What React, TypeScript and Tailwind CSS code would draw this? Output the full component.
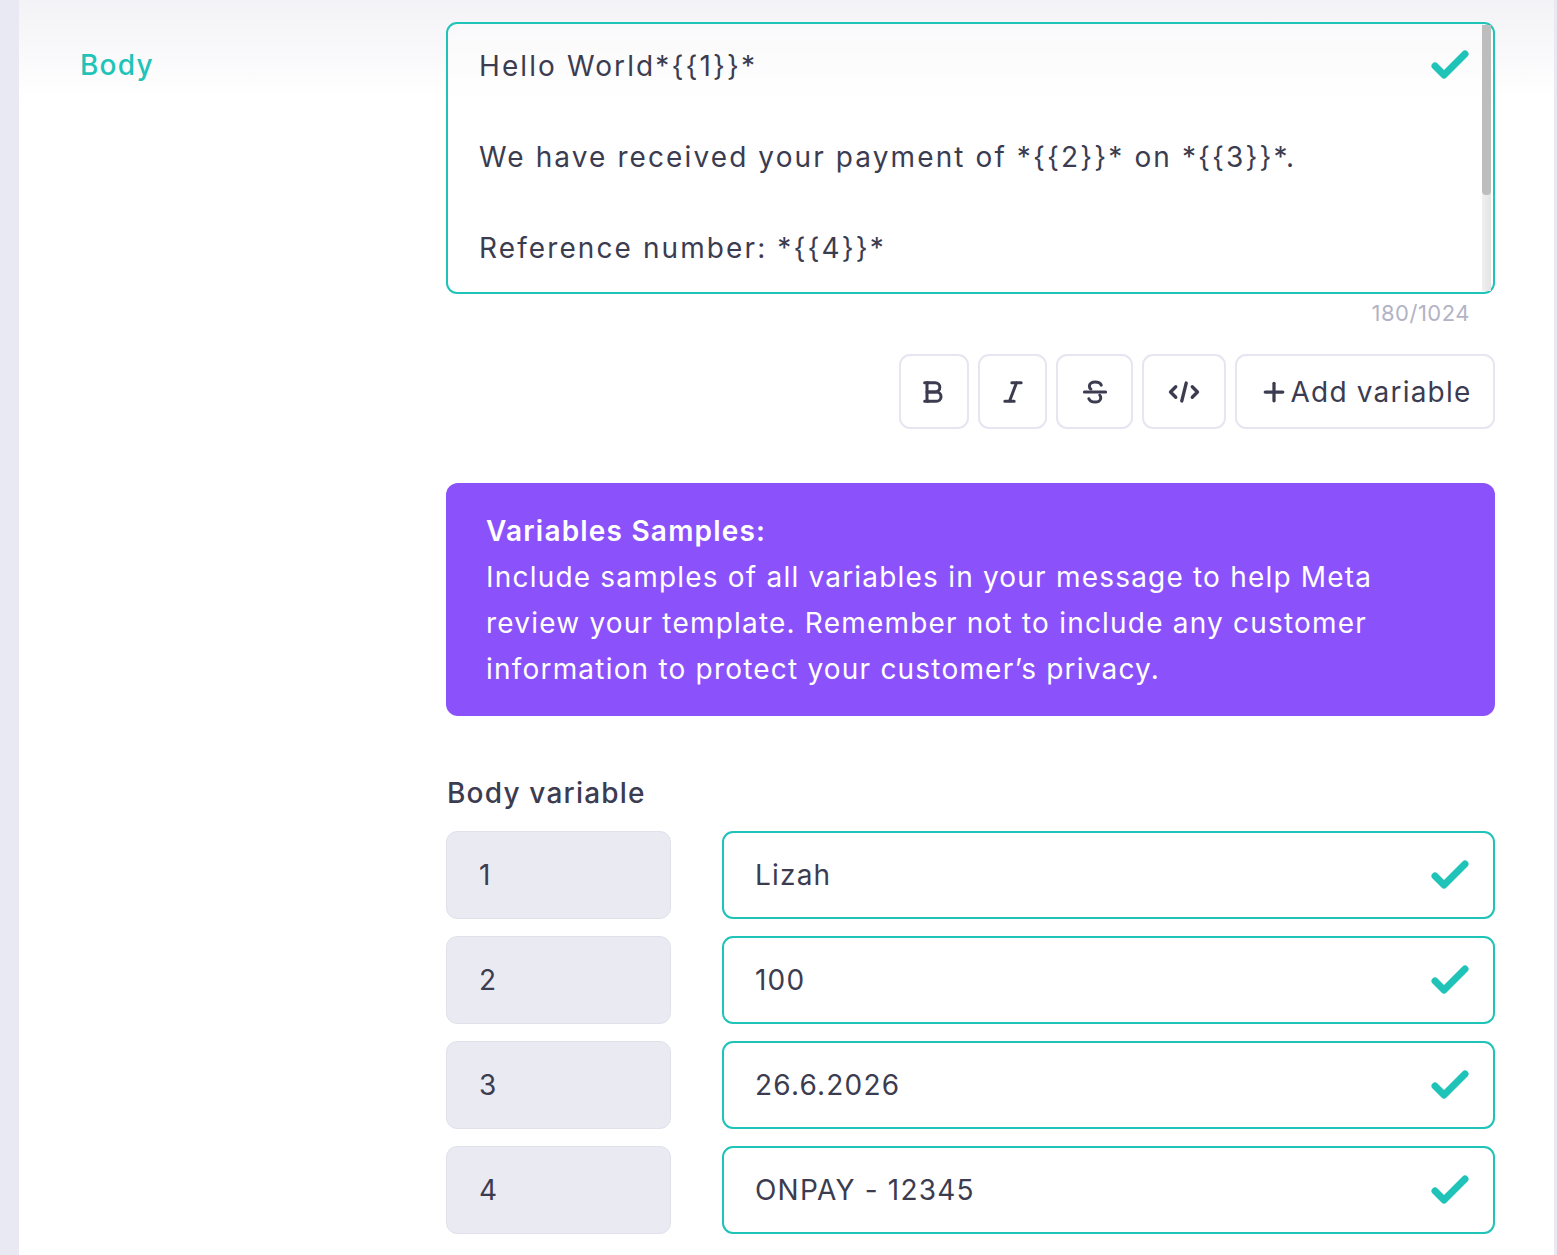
import { Plus } from 'lucide-react';

const teal = '#1fc3b7';

const Check = ({ className = '' }: { className?: string }) => (
  <svg viewBox="0 0 40 32" className={className} fill="none">
    <path d="M5 17 L14 26 L35 5" stroke={teal} strokeWidth="7" strokeLinecap="round" strokeLinejoin="round" />
  </svg>
);

const variables = [
  { id: '1', value: 'Lizah' },
  { id: '2', value: '100' },
  { id: '3', value: '26.6.2026' },
  { id: '4', value: 'ONPAY - 12345' },
];

const ToolBtn = ({ w, children }: { w: string; children: React.ReactNode }) => (
  <button className={`${w} h-[75px] rounded-[11px] border-2 border-[#e6e6f1] bg-white flex items-center justify-center text-[#3c3c50]`}>
    {children}
  </button>
);

const App = () => {
  return (
    <div className="min-h-screen w-full bg-[#e9e9f3] pl-[19px] pr-[3px] font-['Inter',sans-serif] tracking-[1.2px] text-[#3c3c50]">
      <div className="min-h-[1255px] bg-gradient-to-b from-[#f3f3f7] via-white via-[8%] to-white flex">
        {/* label column */}
        <div className="w-[427px] shrink-0 pl-[61px] pt-[45px]">
          <h2 className="text-[28px] leading-[40px] text-[#1fc3b7] font-medium">Body</h2>
        </div>

        <div className="w-[1049px] shrink-0 pt-[22px]">
          {/* message body */}
          <div className="relative h-[272px] rounded-[11px] border-2 border-[#1fc3b7] bg-white/40 pl-[31px] pt-[20px] pr-[80px] text-[28px] leading-[45.5px] tracking-[2.1px]">
            <p>Hello World*{'{{1}}'}*</p>
            <p>&nbsp;</p>
            <p>We have received your payment of *{'{{2}}'}* on *{'{{3}}'}*.</p>
            <p>&nbsp;</p>
            <p>Reference number: *{'{{4}}'}*</p>
            <Check className="absolute right-[23px] top-[24px] w-[40px] h-[34px]" />
            <div className="absolute right-[2px] top-[1px] bottom-[1px] w-[9px] bg-gradient-to-r from-[#f0f0f0] to-[#e4e4e4] flex flex-col">
              <div className="h-[170px] rounded-b-[4px] bg-[#bdbdbd]" />
            </div>
          </div>
          <div className="pr-[25px] pt-[4px] text-right text-[22px] leading-[30px] tracking-[0.5px] text-[#b3b3c6]">180/1024</div>

          {/* formatting toolbar */}
          <div className="mt-[26px] flex justify-end gap-[9px]">
            <ToolBtn w="w-[70px]">
              <svg viewBox="0 0 24 24" className="w-[28px] h-[28px]" fill="none" stroke="currentColor" strokeWidth="2.6" strokeLinecap="round" strokeLinejoin="round">
                <path d="M6 4h7a4 4 0 0 1 0 8H6z" />
                <path d="M6 12h8a4 4 0 0 1 0 8H6z" />
                <path d="M4 4h3M4 20h3" />
              </svg>
            </ToolBtn>
            <ToolBtn w="w-[69px]">
              <svg viewBox="0 0 24 24" className="w-[28px] h-[28px]" fill="none" stroke="currentColor" strokeWidth="2.6" strokeLinecap="round">
                <path d="M11 4h8M5 20h8M15 4 9 20" />
              </svg>
            </ToolBtn>
            <ToolBtn w="w-[77px]">
              <svg viewBox="0 0 24 24" className="w-[30px] h-[30px]" fill="none" stroke="currentColor" strokeWidth="2.4" strokeLinecap="round" strokeLinejoin="round">
                <path d="M17 6.5C16.3 4.8 14.6 4 12.2 4 9.3 4 7.5 5.3 7.5 7.3c0 1 .4 1.8 1.2 2.4" />
                <path d="M3.5 12h17" />
                <path d="M15.8 14.5c.5.6.8 1.3.8 2.2 0 2.1-2 3.3-4.6 3.3-2.5 0-4.2-.9-4.9-2.6" />
              </svg>
            </ToolBtn>
            <ToolBtn w="w-[84px]">
              <svg viewBox="0 0 24 24" className="w-[36px] h-[36px]" fill="none" stroke="currentColor" strokeWidth="2.2" strokeLinecap="round" strokeLinejoin="round">
                <path d="M6.5 8.5 3 12l3.5 3.5M17.5 8.5 21 12l-3.5 3.5M13.5 6l-3 12" />
              </svg>
            </ToolBtn>
            <button className="w-[260px] h-[75px] rounded-[11px] border-2 border-[#e6e6f1] bg-white flex items-center justify-center gap-[2px] text-[28px] text-[#3c3c50]">
              <Plus className="w-[30px] h-[30px]" strokeWidth={2.6} />
              Add variable
            </button>
          </div>

          {/* sample notice */}
          <div className="mt-[54px] rounded-[12px] bg-[#8b52fb] px-[40px] pt-[25px] pb-[24px] text-white text-[28px] leading-[46px]">
            <p className="font-semibold">Variables Samples:</p>
            <p>
              Include samples of all variables in your message to help Meta
              <br />
              review your template. Remember not to include any customer
              <br />
              information to protect your customer’s privacy.
            </p>
          </div>

          {/* variable samples */}
          <h3 className="mt-[59px] pl-px text-[28px] leading-[36px] font-medium">Body variable</h3>
          <div className="mt-[20px] flex flex-col gap-[17px]">
            {variables.map((v) => (
              <div key={v.id} className="flex gap-[51px]">
                <div className="w-[225px] h-[88px] rounded-[11px] border border-[#e1e1ec] bg-[#eaeaf3] pl-[32px] flex items-center text-[28px]">
                  {v.id}
                </div>
                <div className="flex-1 h-[88px] rounded-[11px] border-2 border-[#1fc3b7] bg-white pl-[31px] pr-[23px] flex items-center justify-between text-[28px]">
                  <span>{v.value}</span>
                  <Check className="w-[40px] h-[34px]" />
                </div>
              </div>
            ))}
          </div>
        </div>
      </div>
    </div>
  );
};

export default App;
